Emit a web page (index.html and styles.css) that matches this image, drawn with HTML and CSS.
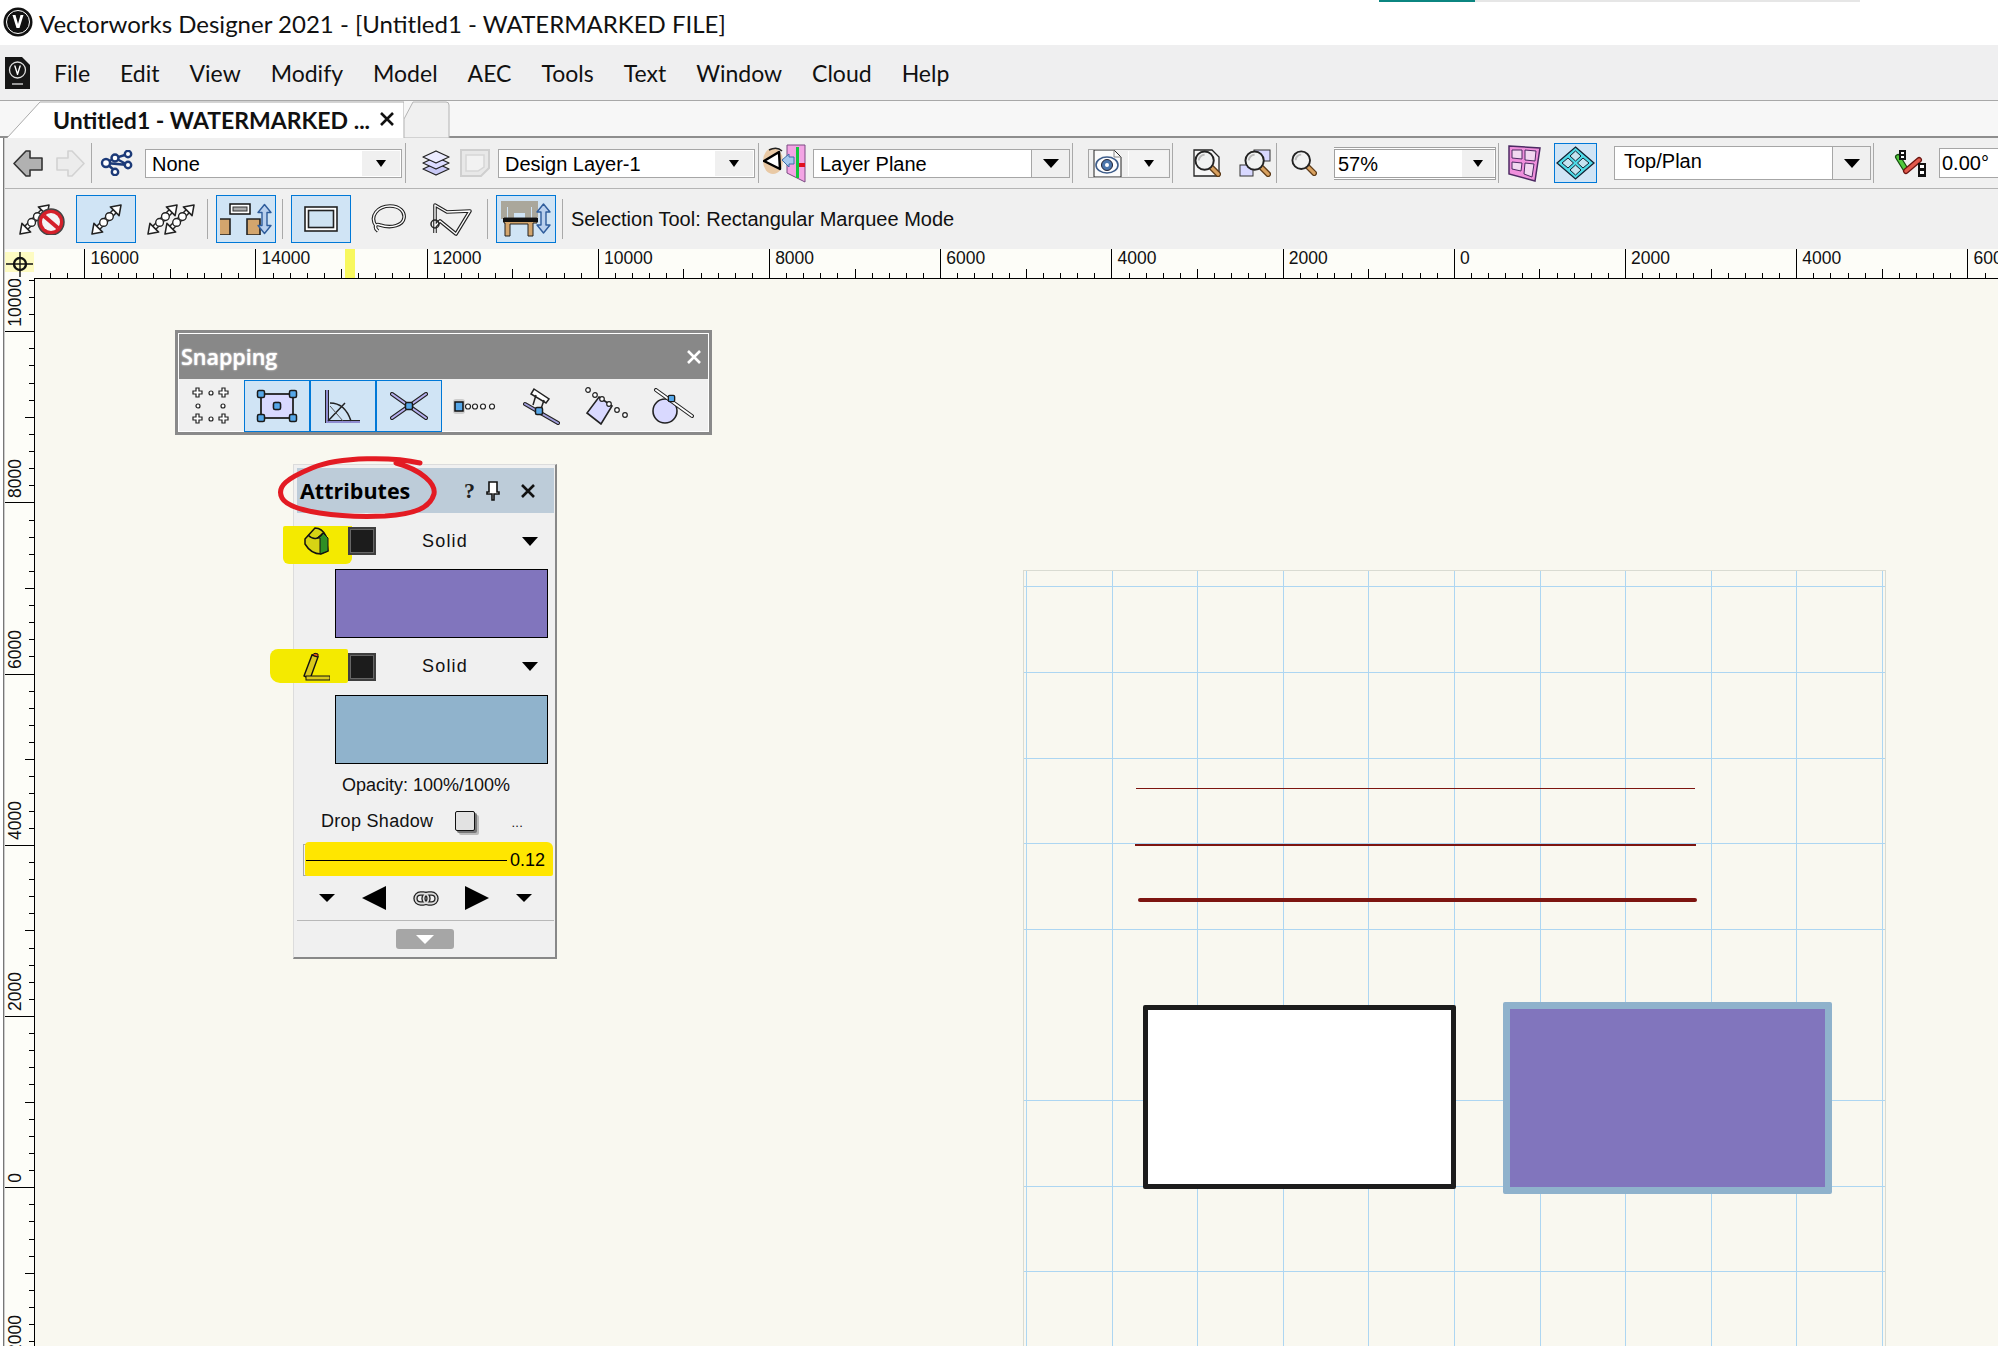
FILE: index.html
```html
<!DOCTYPE html>
<html lang="en">
<head>
<meta charset="utf-8">
<title>Vectorworks Designer 2021</title>
<link rel="stylesheet" href="styles.css">
</head>
<body>
<svg class="defs" width="0" height="0" aria-hidden="true">
  <symbol id="dbl" viewBox="0 0 32 32">
    <path d="M7 25L25 7" stroke="#222" stroke-width="6" fill="none"/>
    <path d="M7 25L25 7" stroke="#fff" stroke-width="3" fill="none"/>
    <path d="M1 31L3 20L12 29Z" fill="#fff" stroke="#222" stroke-width="1.6" stroke-linejoin="round"/>
    <path d="M31 1L29 12L20 3Z" fill="#fff" stroke="#222" stroke-width="1.6" stroke-linejoin="round"/>
    <circle cx="13" cy="19" r="4" fill="#fff" stroke="#222" stroke-width="1.4"/>
    <circle cx="19" cy="13" r="4" fill="#fff" stroke="#222" stroke-width="1.4"/>
  </symbol>
  <symbol id="updown" viewBox="0 0 15 31">
    <path d="M7.5 1L14 9H10V22H14L7.5 30L1 22H5V9H1Z" fill="#b9d0ee" stroke="#2f5d9c" stroke-width="1.4" stroke-linejoin="round"/>
  </symbol>
  <symbol id="mag" viewBox="0 0 28 28">
    <path d="M17 17L25 25" stroke="#5d3a17" stroke-width="6" stroke-linecap="round"/>
    <path d="M17.500 17.500L25 25" stroke="#d9a15f" stroke-width="3.400" stroke-linecap="round"/>
    <circle cx="11" cy="11" r="9.500" fill="#f1f2f2" stroke="#222" stroke-width="2"/>
    <path d="M5 11A6 6 0 0 1 11 5" stroke="#bbb" stroke-width="2" fill="none"/>
  </symbol>
  <symbol id="snapnode" viewBox="0 0 10 10">
    <rect x="1.500" y="1.500" width="7" height="7" rx="1.500" fill="#56a7e8" stroke="#1a1a1a" stroke-width="1.500"/>
  </symbol>
</svg>

<div class="app">
  <header class="titlebar">
    <svg class="logo" width="30" height="30" viewBox="0 0 30 30"><circle cx="15" cy="15" r="14.500" fill="#111"/><circle cx="15" cy="15" r="11.500" fill="none" stroke="#fff" stroke-width="1"/><path d="M9.500 8L13.500 21H16.500L20.500 8H17.500L15 17L12.500 8Z" fill="#fff"/></svg>
    <span class="app-title">Vectorworks Designer 2021 - [Untitled1 - WATERMARKED FILE]</span>
    <div class="progress"><i></i></div>
  </header>

  <nav class="menubar">
    <svg class="docicon" width="25" height="32" viewBox="0 0 25 32"><path d="M0 0H17L25 8V32H0Z" fill="#161616"/><circle cx="12.500" cy="13" r="8" fill="none" stroke="#ddd" stroke-width="1.300"/><path d="M9 8.500L12 18H13L16 8.500H14.500L12.500 15L10.500 8.500Z" fill="#fff"/><rect x="7" y="26" width="11" height="2" fill="#999"/></svg>
    <ul class="menu">
      <li>File</li><li>Edit</li><li>View</li><li>Modify</li><li>Model</li><li>AEC</li><li>Tools</li><li>Text</li><li>Window</li><li>Cloud</li><li>Help</li>
    </ul>
  </nav>

  <div class="tabbar">
    <div class="tab">
      <svg class="tab-shape" width="404" height="37" viewBox="0 0 404 37"><path d="M7 37L40 1H404V37" fill="#fff" stroke="#aaa"/></svg>
      <span class="tab-label">Untitled1 - WATERMARKED ...</span>
      <svg class="tab-x" width="16" height="16" viewBox="0 0 16 16"><path d="M2 2L14 14M14 2L2 14" stroke="#111" stroke-width="2.600"/></svg>
    </div>
    <div class="tab-new">
      <svg width="46" height="37" viewBox="0 0 46 37"><path d="M0 18L9 1H42Q45 1 45 4V37H0Z" fill="#f0f0f0" stroke="#b4b4b4"/></svg>
    </div>
  </div>

  <div class="workspace">
    <div class="toolbar tb-top">
      <svg class="m8" width="30" height="27" viewBox="0 0 30 27"><path d="M1 13.500L13 1H17V8H29V20H17V26H13Z" fill="#b1b1b1" stroke="#333" stroke-width="1.600" stroke-linejoin="round"/></svg>
      <svg class="m13" width="29" height="27" viewBox="0 0 29 27"><path d="M28 13.500L16 1H12V8H1V20H12V26H16Z" fill="#ececec" stroke="#d2d2d2" stroke-width="1.600" stroke-linejoin="round"/></svg>
      <i class="sep m6"></i>
      <svg class="m8" width="33" height="26" viewBox="0 0 33 26"><g stroke="#1c3a78" stroke-width="2.400" fill="none"><path d="M6 13L15 8L28 4M6 13L15 21M15 8L28 15M6 13L28 15"/><g fill="#fff"><circle cx="6" cy="13" r="4"/><circle cx="15" cy="8" r="3.500"/><circle cx="28" cy="4" r="3.200"/><circle cx="28" cy="15" r="3.200"/><circle cx="15" cy="22" r="3.200"/></g></g></svg>
      <div class="sel w257 m12"><span class="sel-text">None</span><span class="sel-btn"><b class="tri"></b></span></div>
      <i class="sep m3"></i>
      <svg class="m16" width="28" height="26" viewBox="0 0 28 26"><g fill="#d9d9ff" stroke="#222" stroke-width="1.300" stroke-linejoin="round"><path d="M14 13L27 19L14 25L1 19Z" fill="#c9c9f5"/><path d="M14 7L27 13L14 19L1 13Z" fill="#dcdcff"/><path d="M14 1L27 7L14 13L1 7Z" fill="#ececff"/></g></svg>
      <svg class="m10" width="30" height="28" viewBox="0 0 30 28"><path d="M1 1H29V19L21 27H1Z" fill="#e8e8e8" stroke="#cfcfcf" stroke-width="2"/><path d="M6 6H24V18L18 22H6Z" fill="#f2f2f2" stroke="#d6d6d6" stroke-width="1.500"/></svg>
      <div class="sel w257 m8"><span class="sel-text">Design Layer-1</span><span class="sel-btn"><b class="tri"></b></span></div>
      <i class="sep m3"></i>
      <svg class="m4" width="43" height="39" viewBox="0 0 43 39"><ellipse cx="10" cy="17" rx="10" ry="13" fill="#e9c9a5"/><path d="M1 17L16 8L17 25Z" fill="#fff" stroke="#000" stroke-width="2.500" stroke-linejoin="round"/><path d="M6 6Q14 2 19 7" stroke="#222" stroke-width="1.500" fill="none"/><path d="M24 1H42V38L24 29Z" fill="#f3a4e4" stroke="#7a4a82"/><rect x="33" y="3" width="3" height="31" fill="#10c83c"/><path d="M36 19H42V23H36Z" fill="#e01020"/><path d="M19 16L26 10V13H31V20H26V23Z" fill="#a6c9ee" stroke="#3a6ea8"/></svg>
      <div class="sel sel-split w257 m7"><span class="sel-text">Layer Plane</span><span class="sel-btn"><b class="tri tri-lg"></b></span></div>
      <i class="sep m2"></i>
      <div class="sel-view m15"><svg width="29" height="27" viewBox="0 0 29 27"><path d="M1 0H21L28 7V27H1Z" fill="#fbfbfb" stroke="#222"/><path d="M21 0V7H28" fill="none" stroke="#888"/><ellipse cx="14" cy="15" rx="11" ry="8" fill="#fff" stroke="#3e5d8a" stroke-width="1.600"/><circle cx="14" cy="15" r="5.500" fill="#4d77ad" stroke="#223"/><circle cx="14" cy="15" r="2" fill="#fff"/></svg><span class="sel-btn"><b class="tri"></b></span></div>
      <i class="sep m2"></i>
      <svg class="m20" width="28" height="28" viewBox="0 0 28 28"><path d="M1 1H19L26 8V27H1Z" fill="#f6f6f6" stroke="#222" stroke-width="1.300"/><use href="#mag" x="1" y="1" width="27" height="27"/></svg>
      <svg class="m18" width="32" height="28" viewBox="0 0 32 28"><rect x="15" y="1" width="16" height="11" fill="#d8d8ff" stroke="#333"/><rect x="1" y="16" width="13" height="11" fill="#d8d8ff" stroke="#333"/><use href="#mag" x="5" y="1" width="27" height="27"/></svg>
      <i class="sep m5"></i>
      <svg class="m14" width="26" height="26" viewBox="0 0 28 28"><use href="#mag" width="28" height="28"/></svg>
      <div class="sel sel-double w162 m17"><span class="sel-text sel-text-tight">57%</span><span class="sel-btn"><b class="tri"></b></span></div>
      <i class="sep m2"></i>
      <svg class="m9" width="33" height="37" viewBox="0 0 33 37"><path d="M1 1L32 3L27 36L1 29Z" fill="#ef8fdc" stroke="#4d2a63" stroke-width="1.500"/><g fill="#f1d8f0" stroke="#4d2a63"><path d="M4 5L14 5L14 14L4 13Z"/><path d="M17 5L28 6L27 16L17 15Z"/><path d="M4 17L14 18L13 26L4 24Z"/><path d="M17 18L26 19L24 32L16 29Z"/></g></svg>
      <div class="iso m13"><svg width="41" height="38" viewBox="0 0 41 38"><path d="M20.500 3L39 19L20.500 35L2 19Z" fill="#4fdbe8" stroke="#123" stroke-width="1.300"/><g fill="#c5e3ef" stroke="#123"><path d="M20.500 7L26 12L20.500 17L15 12Z"/><path d="M28 14L34 19L28 24L22.500 19Z"/><path d="M13 14L18.500 19L13 24L7 19Z"/><path d="M20.500 21L26 26L20.500 31L15 26Z"/></g></svg></div>
      <div class="sel sel-split sel-tall w257 m17"><span class="sel-text sel-text-wide">Top/Plan</span><span class="sel-btn"><b class="tri tri-lg"></b></span></div>
      <i class="sep m2"></i>
      <svg class="m19" width="33" height="28" viewBox="0 0 33 28"><path d="M5 8L13 21" stroke="#154d0f" stroke-width="6" stroke-linecap="round"/><path d="M5 8L13 21" stroke="#52c83c" stroke-width="3.500" stroke-linecap="round"/><path d="M13 22L26 11" stroke="#6a1410" stroke-width="6" stroke-linecap="round"/><path d="M13 22L26 11" stroke="#e35a4c" stroke-width="3.500" stroke-linecap="round"/><rect x="6" y="1" width="7" height="10" fill="#111"/><path d="M8 3h3v2H8zM8 7h3v2H8z" fill="#fff"/><rect x="25" y="14" width="8" height="14" fill="#111"/><path d="M27 16h4v3h-4zM27 22h4v3h-4z" fill="#fff"/></svg>
      <div class="num-field m13">0.00°</div>
    </div>

    <div class="toolbar tb-mode">
      <svg class="m14" width="47" height="31" viewBox="0 0 47 31"><use href="#dbl" width="31" height="31"/><circle cx="32" cy="18" r="13" fill="#d5202a" stroke="#444" stroke-width="1.500"/><circle cx="32" cy="18" r="9" fill="#f4f4f4"/><path d="M25 12L39 24" stroke="#d5202a" stroke-width="4"/></svg>
      <div class="btn on m10"><svg width="31" height="31" viewBox="0 0 31 31"><use href="#dbl" width="31" height="31"/></svg></div>
      <svg class="m11" width="48" height="31" viewBox="0 0 48 31"><use href="#dbl" x="17" width="31" height="31"/><use href="#dbl" width="31" height="31"/></svg>
      <i class="sep m12"></i>
      <div class="btn on m8"><svg width="52" height="32" viewBox="0 0 52 32"><rect x="10" y="1" width="20" height="10" fill="#fff" stroke="#111" stroke-width="1.500"/><rect x="13" y="4" width="14" height="4" fill="#aaa" stroke="#333"/><path d="M0 16H10V32H0" fill="#d3a56d" stroke="#222" stroke-width="1.600"/><path d="M27 16H40V32H27Z" fill="#d3a56d" stroke="#222" stroke-width="1.600"/><use href="#updown" x="37" width="15" height="32"/></svg></div>
      <i class="sep m6"></i>
      <div class="btn on m8"><svg width="34" height="26" viewBox="0 0 34 26"><rect x="1" y="1" width="32" height="24" fill="#fff" stroke="#222" stroke-width="1.600"/><rect x="4.500" y="4.500" width="25" height="17" fill="#cfe3f2" stroke="#222" stroke-width="1.600"/></svg></div>
      <svg class="m19" width="36" height="30" viewBox="0 0 36 30"><g fill="none" stroke-linejoin="round"><path d="M6 22C-1 12 8 2 20 2C30 2 35 8 34 14C33 21 22 25 10 21C5 19 4 24 8 27" stroke="#222" stroke-width="3.600"/><path d="M6 22C-1 12 8 2 20 2C30 2 35 8 34 14C33 21 22 25 10 21C5 19 4 24 8 27" stroke="#fff" stroke-width="1.400"/></g></svg>
      <svg class="m23" width="43" height="33" viewBox="0 0 43 33"><g fill="none" stroke-linejoin="round"><path d="M6 23V2L18 9L41 8L27 31L11 18L6 23V30" stroke="#222" stroke-width="3.600"/><path d="M6 23V2L18 9L41 8L27 31L11 18L6 23V30" stroke="#fff" stroke-width="1.400"/></g><circle cx="6" cy="21" r="4" fill="none" stroke="#222" stroke-width="1.500"/></svg>
      <i class="sep m15"></i>
      <div class="btn on m8"><svg width="50" height="36" viewBox="0 0 50 36"><path d="M3 18V3H34V18M10 18V9H27V18" fill="none" stroke="#aaa79b" stroke-width="6"/><path d="M3 17H36V22H32V35H27V23H9V35H4V22H3Z" fill="#d3a56d" stroke="#222" stroke-width="1"/><rect x="2" y="17" width="35" height="4" fill="#111"/><use href="#updown" x="35" y="2" width="15" height="31"/></svg></div>
      <i class="sep m6"></i>
      <span class="mode-text m8">Selection Tool: Rectangular Marquee Mode</span>
    </div>

    <div class="h-ruler">
      <div class="corner">
        <svg width="29" height="29" viewBox="0 0 29 29"><rect y="3" width="29" height="20" fill="#fdfbc2"/><circle cx="15" cy="15" r="6" fill="none" stroke="#111" stroke-width="2.400"/><path d="M1 15H28M15 3V28" stroke="#111" stroke-width="1.400"/></svg>
      </div>
      <div class="h-track">
        <div class="h-ticks">
          <span class="h-cell"></span>
          <span class="h-cell">16000</span><span class="h-cell">14000</span><span class="h-cell">12000</span><span class="h-cell">10000</span><span class="h-cell">8000</span><span class="h-cell">6000</span><span class="h-cell">4000</span><span class="h-cell">2000</span><span class="h-cell">0</span><span class="h-cell">2000</span><span class="h-cell">4000</span><span class="h-cell">6000</span>
        </div>
        <i class="cursor-mark"></i>
      </div>
    </div>

    <div class="stage">
      <div class="v-ruler">
        <div class="v-ticks">
          <span class="v-cell"><b>10000</b></span><span class="v-cell"><b>8000</b></span><span class="v-cell"><b>6000</b></span><span class="v-cell"><b>4000</b></span><span class="v-cell"><b>2000</b></span><span class="v-cell"><b>0</b></span><span class="v-cell"><b>2000</b></span><span class="v-cell"><b>4000</b></span>
        </div>
      </div>

      <main class="canvas">
        <div class="sheet"></div>
        <i class="stroke stroke-a"></i>
        <i class="stroke stroke-b"></i>
        <i class="stroke stroke-c"></i>
        <div class="shape shape-white"></div>
        <div class="shape shape-purple"></div>

        <section class="snapping">
          <div class="snap-title"><span>Snapping</span><svg width="16" height="16" viewBox="0 0 16 16"><path d="M2 2L14 14M14 2L2 14" stroke="#fff" stroke-width="2.600"/></svg></div>
          <div class="snap-tools">
            <div class="snap"><svg width="40" height="38" viewBox="0 0 40 38"><g fill="#fff" stroke="#222" stroke-width="1.200"><g id="crosses"><path d="M7 2h3v3h3v3h-3v3H7V8H4V5h3Z" transform="translate(-2 -1)"/><path d="M7 2h3v3h3v3h-3v3H7V8H4V5h3Z" transform="translate(24 -1)"/><path d="M7 2h3v3h3v3h-3v3H7V8H4V5h3Z" transform="translate(-2 25)"/><path d="M7 2h3v3h3v3h-3v3H7V8H4V5h3Z" transform="translate(24 25)"/></g><circle cx="20" cy="6" r="2"/><circle cx="20" cy="32" r="2"/><circle cx="7" cy="19" r="2"/><circle cx="32" cy="19" r="2"/></g></svg></div>
            <div class="snap on"><svg width="44" height="34" viewBox="0 0 44 34"><rect x="6" y="5" width="32" height="24" fill="#d9d9ff" stroke="#222" stroke-width="1.800"/><circle cx="22" cy="17" r="5" fill="#c0c0ee"/><use href="#snapnode" x="17" y="12" width="10" height="10"/><use href="#snapnode" x="1" y="0" width="10" height="10"/><use href="#snapnode" x="33" y="0" width="10" height="10"/><use href="#snapnode" x="1" y="24" width="10" height="10"/><use href="#snapnode" x="33" y="24" width="10" height="10"/></svg></div>
            <div class="snap on"><svg width="36" height="34" viewBox="0 0 36 34"><path d="M2 1V33H35" fill="none" stroke="#222" stroke-width="4"/><path d="M2 1V33H35" fill="none" stroke="#8f8cd0" stroke-width="2"/><path d="M3 32L20 14M5 14Q20 14 26 32" fill="none" stroke="#222" stroke-width="1.500"/><path d="M5 17L18 32" fill="none" stroke="#555"/></svg></div>
            <div class="snap on"><svg width="38" height="28" viewBox="0 0 38 28"><path d="M2 2L36 26M36 2L2 26" stroke="#222" stroke-width="4" stroke-linecap="round"/><path d="M2 2L36 26M36 2L2 26" stroke="#b6b0ef" stroke-width="2" stroke-linecap="round"/><use href="#snapnode" x="14" y="9" width="10" height="10"/></svg></div>
            <div class="snap"><svg width="44" height="15" viewBox="0 0 44 15"><rect x="0" y="0" width="12" height="15" rx="3" fill="#ccc"/><rect x="2" y="3" width="8" height="9" fill="#56a7e8" stroke="#111" stroke-width="1.500"/><g fill="#fff" stroke="#222" stroke-width="1.200"><circle cx="15" cy="7.500" r="2.500"/><circle cx="22" cy="7.500" r="2.500"/><circle cx="30" cy="7.500" r="2.500"/><circle cx="39" cy="7.500" r="2.500"/></g></svg></div>
            <div class="snap"><svg width="37" height="38" viewBox="0 0 37 38"><path d="M11 2L26 12L23 16L8 7Z" fill="#fff" stroke="#222" stroke-width="1.500"/><path d="M13 8L10 18M21 13L18 22" stroke="#222" stroke-width="1.500"/><path d="M2 17L35 36" stroke="#222" stroke-width="4" stroke-linecap="round"/><path d="M2 17L35 36" stroke="#a29fdc" stroke-width="2" stroke-linecap="round"/><use href="#snapnode" x="11" y="19" width="10" height="10"/></svg></div>
            <div class="snap"><svg width="44" height="38" viewBox="0 0 44 38"><path d="M14 10L27 19L16 37L2 26Z" fill="#d9d9ff" stroke="#222" stroke-width="1.600"/><g fill="#fff" stroke="#222" stroke-width="1.200"><circle cx="3" cy="3" r="2.300"/><circle cx="10" cy="8" r="2.300"/><circle cx="17" cy="12" r="2.300"/><circle cx="24" cy="17" r="2.300"/><circle cx="32" cy="23" r="2.300"/><circle cx="40" cy="28" r="2.300"/></g></svg></div>
            <div class="snap"><svg width="42" height="36" viewBox="0 0 42 36"><circle cx="13" cy="23" r="12" fill="#d9d9ff" stroke="#222" stroke-width="1.600"/><path d="M4 2L40 28" stroke="#222" stroke-width="4" stroke-linecap="round"/><path d="M4 2L40 28" stroke="#fff" stroke-width="2" stroke-linecap="round"/><use href="#snapnode" x="15" y="6" width="9" height="9"/></svg></div>
          </div>
        </section>

        <section class="attrs">
          <div class="attrs-title">
            <span class="attrs-name">Attributes</span>
            <span class="attrs-help">?</span>
            <svg width="14" height="20" viewBox="0 0 14 20"><path d="M3 1H11V11H13V13H8V19H6V13H1V11H3Z" fill="#fff" stroke="#111" stroke-width="1.600"/></svg>
            <svg class="attrs-x" width="16" height="16" viewBox="0 0 16 16"><path d="M2 2L14 14M14 2L2 14" stroke="#111" stroke-width="2.600"/></svg>
          </div>
          <div class="attr-row row-fill">
            <i class="marker marker-fill"></i>
            <svg class="attr-icon" width="28" height="28" viewBox="0 0 28 28"><path d="M3 12L13 1Q20 1 24 9L26 24L19 27Q9 27 3 17Z" fill="#d6d414" stroke="#111" stroke-width="1.500"/><path d="M18 27V11H15L21 6L26 11V24Z" fill="#2f8f24" stroke="#111"/><path d="M6 8Q14 16 21 6" fill="none" stroke="#111" stroke-width="1.500"/></svg>
            <span class="swatch-mini"></span>
            <span class="attr-label">Solid</span>
            <b class="tri tri-lg attr-arrow"></b>
          </div>
          <div class="color-well well-fill"></div>
          <div class="attr-row row-pen">
            <i class="marker marker-pen"></i>
            <svg class="attr-icon" width="28" height="29" viewBox="0 0 28 29"><path d="M2 24L10 3L16 5L8 27Z" fill="#d9c91c" stroke="#111" stroke-width="1.400"/><path d="M10 3Q13 0 16 2V5Z" fill="#ea5a10" stroke="#111"/><rect x="4" y="24" width="24" height="4" fill="#d9c91c" stroke="#111"/></svg>
            <span class="swatch-mini"></span>
            <span class="attr-label">Solid</span>
            <b class="tri tri-lg attr-arrow"></b>
          </div>
          <div class="color-well well-pen"></div>
          <div class="opacity">Opacity: 100%/100%</div>
          <div class="shadow-row">
            <span>Drop Shadow</span>
            <i class="check"></i>
            <span class="more">...</span>
          </div>
          <div class="weight"><i class="weight-line"></i><span>0.12</span></div>
          <div class="nav-row">
            <b class="tri tri-md"></b>
            <svg width="24" height="24" viewBox="0 0 24 24"><path d="M0 12L24 0V24Z" fill="#000"/></svg>
            <svg width="26" height="15" viewBox="0 0 26 15"><g fill="none" stroke="#222" stroke-width="4.400"><rect x="2.500" y="2.500" width="13" height="10" rx="5"/><rect x="10.500" y="2.500" width="13" height="10" rx="5"/></g><g fill="none" stroke="#ddd" stroke-width="1.800"><rect x="2.500" y="2.500" width="13" height="10" rx="5"/><rect x="10.500" y="2.500" width="13" height="10" rx="5"/></g></svg>
            <svg width="24" height="24" viewBox="0 0 24 24"><path d="M24 12L0 0V24Z" fill="#000"/></svg>
            <b class="tri tri-md"></b>
          </div>
          <hr class="rule">
          <div class="collapse"><i></i></div>
        </section>

        <svg class="scribble" width="175" height="75" viewBox="0 0 175 75"><path d="M150 13C125 7 70 6 42 18C18 28 6 36 12 48C20 62 70 68 115 66C145 64 160 58 164 44C166 34 152 20 126 13" fill="none" stroke="#e31b23" stroke-width="5" stroke-linecap="round"/></svg>
      </main>
    </div>
  </div>
</div>
</body>
</html>
```

FILE: styles.css
```css
* { box-sizing: border-box; }
html, body { margin: 0; padding: 0; background: #fff; }
.defs { position: absolute; }
.app { width: 1998px; height: 1346px; overflow: hidden; display: flex; flex-direction: column; font-family: "Liberation Sans", Arial, sans-serif; color: #000; }
i, b { display: block; }

/* title bar */
.titlebar { height: 45px; flex: none; display: flex; align-items: center; padding-left: 3px; background: #fff; position: relative; }
.logo { margin-top: -1px; }
.app-title { margin-left: 6px; font: 24px "Lato", sans-serif; color: #111; white-space: nowrap; position: relative; top: 1px; }
.progress { position: absolute; left: 1379px; top: 0; width: 481px; height: 2px; background: #e6e6e6; }
.progress i { width: 96px; height: 2px; background: #0b8580; }

/* menu */
.menubar { height: 56px; flex: none; background: #efeff0; border-bottom: 1px solid #a8a8a8; display: flex; align-items: center; padding-left: 5px; }
.menu { list-style: none; margin: 0 0 0 24px; padding: 0; display: flex; gap: 30px; font: 23px "Lato", sans-serif; color: #111; }

/* tabs */
.tabbar { height: 37px; flex: none; background: #f7f7f7; border-bottom: 2px solid #8e8e8e; display: flex; }
.tab { width: 404px; height: 37px; position: relative; display: flex; align-items: center; padding-left: 53px; }
.tab-shape { position: absolute; left: 0; top: 0; }
.tab-label { position: relative; font: 700 23px "Lato", sans-serif; color: #111; white-space: nowrap; }
.tab-x { position: absolute; left: 379px; top: 10px; }
.tab-new { width: 46px; height: 37px; }

/* workspace */
.workspace { flex: 1; min-height: 0; margin-left: 3px; border-left: 1px solid #777; padding-left: 1px; display: flex; flex-direction: column; box-shadow: inset 1px 0 0 #ccc; }
.toolbar { flex: none; display: flex; align-items: center; background: #f0f0f0; }
.toolbar > * { flex: none; }
.tb-top { height: 51px; border-bottom: 1px solid #b4b4b4; }
.tb-mode { height: 60px; }
.sep { width: 1px; height: 40px; background: #a9a9a9; }
.m2 { margin-left: 2px; } .m3 { margin-left: 3px; } .m4 { margin-left: 4px; } .m5 { margin-left: 5px; }
.m6 { margin-left: 6px; } .m7 { margin-left: 7px; } .m8 { margin-left: 8px; } .m9 { margin-left: 9px; }
.m10 { margin-left: 10px; } .m11 { margin-left: 11px; } .m12 { margin-left: 12px; } .m13 { margin-left: 13px; }
.m14 { margin-left: 14px; } .m15 { margin-left: 15px; } .m16 { margin-left: 16px; } .m17 { margin-left: 17px; }
.m18 { margin-left: 18px; } .m19 { margin-left: 19px; } .m20 { margin-left: 20px; } .m23 { margin-left: 23px; }

/* selects */
.sel { height: 29px; background: #fff; border: 1px solid #a6a6a6; display: flex; align-items: stretch; font-size: 20px; }
.w257 { width: 257px; }
.w162 { width: 162px; }
.sel-text { flex: 1; padding-left: 6px; line-height: 28px; white-space: nowrap; }
.sel-text-tight { padding-left: 3px; }
.sel-text-wide { padding-left: 9px; }
.sel-btn { width: 38px; background: #f0f0f0; display: flex; align-items: center; justify-content: center; margin: 1px; }
.sel-split .sel-btn { margin: 0; border-left: 1px solid #a6a6a6; }
.sel-double { height: 33px; border-width: 3px 1px 3px 1px; border-style: double; border-color: #a0a0a0; }
.sel-double .sel-btn { width: 32px; margin: 0 1px 0 0; }
.sel-tall { height: 34px; }
.tri { width: 0; height: 0; border-style: solid; border-width: 7px 5px 0; border-color: #000 transparent transparent; }
.tri-lg { border-width: 9px 8px 0; }
.tri-md { border-width: 8px 8.500px 0; }
.sel-view { width: 82px; height: 29px; border: 1px solid #a6a6a6; background: #f0f0f0; display: flex; align-items: center; padding-left: 4px; }
.sel-view .sel-btn { flex: 1; align-self: stretch; margin: 1px 1px 1px 6px; background: #f3f3f3; border-left: 1px solid #fff; }
.iso { width: 43px; height: 40px; background: #d0e4f5; border: 1px solid #0078d7; display: flex; align-items: center; justify-content: center; }
.num-field { width: 71px; height: 30px; border: 1px solid #a6a6a6; background: #fff; font-size: 20px; line-height: 28px; padding-left: 2px; }
.btn { width: 60px; height: 48px; display: flex; align-items: center; justify-content: center; }
.btn.on { background: #d0e4f5; border: 1px solid #0078d7; }
.mode-text { font-size: 20px; white-space: nowrap; color: #111; }

/* rulers */
.h-ruler { height: 30px; flex: none; display: flex; background: #fdfdf8; }
.corner { width: 29px; flex: none; }
.corner svg { display: block; }
.h-track { flex: 1; min-width: 0; position: relative; overflow: hidden; border-bottom: 1px solid #000; }
.h-ticks {
  margin-left: -120.800px;
  width: 2400px;
  height: 29px;
  display: flex;
  font-size: 17.500px;
  line-height: 19px;
  color: #111;
  background:
    repeating-linear-gradient(to right, #000 0 1px, transparent 1px 171.200px) 0 0 / 100% 100% no-repeat,
    repeating-linear-gradient(to right, #000 0 1px, transparent 1px 85.600px) 0 100% / 100% 9px no-repeat,
    repeating-linear-gradient(to right, #000 0 1px, transparent 1px 17.120px) 0 100% / 100% 5px no-repeat;
}
.h-cell { flex: none; width: 171.200px; padding-left: 6px; }
.h-cell:empty { padding: 0; }
.cursor-mark { position: absolute; left: 311px; top: 0; width: 10px; height: 29px; background: #f8f85e; }

.stage { flex: 1; min-height: 0; display: flex; }
.v-ruler { width: 30px; flex: none; overflow: hidden; background: #fdfdf8; border-right: 1px solid #000; }
.v-ticks {
  margin-top: -118.800px;
  width: 29px;
  height: 1500px;
  display: flex;
  flex-direction: column;
  font-size: 17.500px;
  color: #111;
  background:
    repeating-linear-gradient(to bottom, #000 0 1px, transparent 1px 171.200px) 0 0 / 100% 100% no-repeat,
    repeating-linear-gradient(to bottom, #000 0 1px, transparent 1px 85.600px) 100% 0 / 9px 100% no-repeat,
    repeating-linear-gradient(to bottom, #000 0 1px, transparent 1px 17.120px) 100% 0 / 5px 100% no-repeat;
  background-position-y: 0;
}
.v-cell { flex: none; height: 171.200px; position: relative; padding-left: 3px; display: flex; align-items: flex-end; }
.v-cell:first-child { height: 171.200px; }
.v-cell b { font-weight: 400; writing-mode: vertical-rl; transform: rotate(180deg); line-height: 15px; margin-bottom: 5px; transform-origin: center; }

/* canvas */
.canvas { flex: 1; min-width: 0; position: relative; overflow: hidden; background: #f9f8f0; }
.sheet {
  position: absolute; left: 988px; top: 291px; width: 863px; height: 800px;
  border: 1px solid #d9dbd2;
  background:
    repeating-linear-gradient(to right, transparent 0 2px, #add6f2 2px 3px, transparent 3px 85.600px),
    repeating-linear-gradient(to bottom, transparent 0 15.500px, #add6f2 15.500px 16.500px, transparent 16.500px 85.600px);
}
.stroke { position: absolute; background: #7d1510; }
.stroke-a { left: 1101px; top: 509px; width: 559px; height: 1px; }
.stroke-b { left: 1100px; top: 565px; width: 561px; height: 2px; }
.stroke-c { left: 1103px; top: 619px; width: 559px; height: 4px; border-radius: 2px; }
.shape { position: absolute; }
.shape-white { left: 1108px; top: 726px; width: 313px; height: 184px; background: #fff; border: 5px solid #1c1c1c; border-radius: 2px; }
.shape-purple { left: 1468px; top: 723px; width: 329px; height: 192px; background: #8175bd; border: 7px solid #8fb2cc; border-radius: 2px; }

/* snapping palette */
.snapping { position: absolute; left: 140px; top: 51px; width: 537px; height: 105px; background: #f0f0f0; border: 3px solid #8a8a8a; box-shadow: inset 0 0 0 1px #fff; padding: 1px; }
.snap-title { height: 45px; background: #888; color: #fff; display: flex; align-items: center; justify-content: space-between; padding: 0 6px 0 2px; font: 600 21.500px "Open Sans", sans-serif; }
.snap-title span { text-shadow: 0 0 2px #fff; }
.snap-tools { display: flex; padding: 1px 0 0 66px; margin-left: -1px; position: relative; }
.snap { width: 66px; height: 52px; display: flex; align-items: center; justify-content: center; flex: none; }
.snap:first-child { margin-left: -66px; }
.snap.on { background: #d0e4f5; border: 1px solid #0078d7; }
.snap-tools .snap:first-child { margin-left: -66px; margin-right: 0; }

/* attributes palette */
.attrs { position: absolute; left: 258px; top: 185px; width: 264px; height: 495px; background: #f0f0f0; border-left: 1px solid #dcdcdc; border-top: 1px solid #dcdcdc; border-right: 2px solid #888; border-bottom: 2px solid #888; padding-top: 3px; }
.attrs-title { height: 45px; margin: 0 0 0 3px; width: 257px; background: #bdccd9; display: flex; align-items: center; position: relative; }
.attrs-name { font: 700 21.500px "Open Sans", sans-serif; margin-left: 3px; width: 153px; color: #000; }
.attrs-help { font: 700 22px "Liberation Serif", serif; width: 33px; text-align: center; color: #222; }
.attrs-x { margin-left: 20px; }
.attr-row { display: flex; align-items: center; height: 28px; position: relative; padding-left: 8px; }
.row-fill { margin-top: 14px; }
.row-pen { margin-top: 14px; height: 29px; }
.attr-icon { position: relative; }
.marker { position: absolute; background: #f4ea00; }
.marker-fill { left: -11px; top: -1px; width: 69px; height: 38px; border-radius: 2px 0 6px 6px; }
.marker-pen { left: -24px; top: -3px; width: 78px; height: 34px; border-radius: 8px 2px 2px 10px; }
.swatch-mini { width: 28px; height: 28px; margin-left: 18px; background: #1c1c1c; border: 2px solid #3e3e3e; box-shadow: 0 0 0 1px #666 inset; position: relative; }
.attr-label { width: 46px; margin-left: 46px; font-size: 18px; letter-spacing: 1.200px; color: #111; }
.attr-arrow { margin-left: 54px; }
.color-well { margin: 14px 0 0 41px; width: 213px; height: 69px; border: 1px solid #000; }
.well-fill { background: #8175bd; }
.well-pen { background: #90b3cc; }
.opacity { margin: 9px 0 0 48px; height: 24px; line-height: 24px; font-size: 18px; color: #111; white-space: nowrap; }
.shadow-row { margin-top: 13px; height: 22px; padding-left: 27px; display: flex; align-items: center; font-size: 18px; letter-spacing: .300px; color: #111; }
.check { width: 20px; height: 20px; margin-left: 22px; background: #e2e2e2; border: 1.500px solid #111; border-radius: 2px; box-shadow: 2px 2px 0 #777, 4px 4px 0 #bbb; }
.more { margin-left: 36px; font-size: 13px; line-height: 22px; position: relative; top: 2px; }
.weight { margin: 12px 0 0 9px; width: 245px; height: 32px; border: 1px solid #a8a8a8; display: flex; align-items: center; padding-left: 2px; font-size: 18px; position: relative; z-index: 0; }
.weight::before { content: ""; position: absolute; left: 1px; top: -3px; width: 248px; height: 34px; background: #ffe600; border-radius: 4px 6px 2px 2px; z-index: -1; }
.weight-line { width: 201px; height: 1px; background: #000; }
.weight span { margin-left: 3px; }
.nav-row { margin: 10px 0 0 25px; width: 213px; height: 24px; display: flex; align-items: center; justify-content: space-between; }
.rule { margin: 10px 0 0 3px; width: 257px; height: 1px; border: 0; background: #b8b8b8; }
.collapse { margin: 8px 0 0 102px; width: 58px; height: 20px; background: #a6a6a6; border-radius: 3px; display: flex; align-items: center; justify-content: center; }
.collapse i { width: 0; height: 0; border-style: solid; border-width: 9px 9.500px 0; border-color: #fff transparent transparent; }
.scribble { position: absolute; left: 235px; top: 171px; pointer-events: none; }
```
